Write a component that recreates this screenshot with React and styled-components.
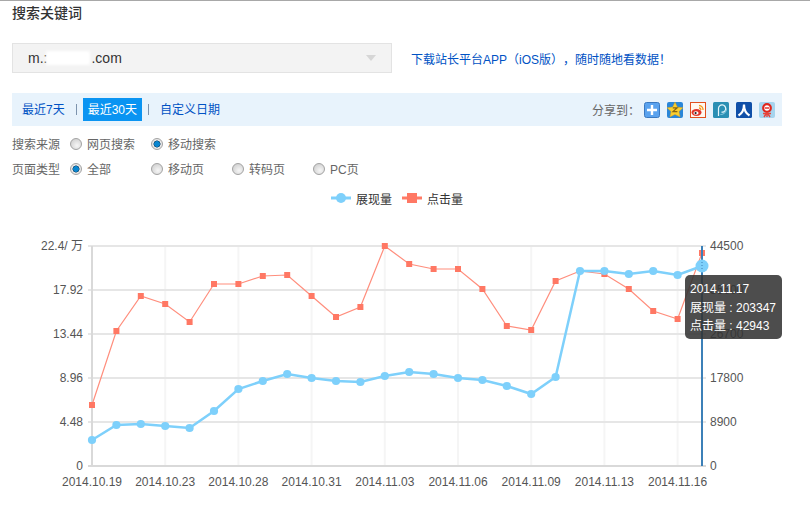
import React from 'react';
import styled, { createGlobalStyle } from 'styled-components';

const GlobalStyle = createGlobalStyle`
    html, body {
        margin: 0;
        padding: 0;
        background: #fff;
    }
    body {
        font-family: "Liberation Sans", "Noto Sans CJK SC", sans-serif;
        font-size: 12px;
        color: #555;
        text-spacing-trim: space-all;
    }
`

const Page = styled.div`
    width: 810px;
    height: 517px;
    overflow: hidden;
    border-top: 1px solid #a8a8a8;
    box-sizing: border-box;
`
const Title = styled.h2`
    margin: 0;
    padding-left: 12px;
    height: 24px;
    line-height: 24px;
    font-size: 14px;
    font-weight: 500;
    color: #333;
`
const SiteRow = styled.div`
    display: flex;
    align-items: center;
    margin: 18px 0 0 12px;
`
const SiteSelect = styled.div`
    width: 380px;
    height: 30px;
    box-sizing: border-box;
    padding: 0 15px;
    display: flex;
    align-items: center;
    justify-content: space-between;
    background: #f3f3f3;
    border: 1px solid #e3e3e3;
`
const SiteName = styled.span`
    display: flex;
    align-items: center;
    font-size: 14px;
    color: #333;
`
const Redacted = styled.span`
    width: 44px;
    height: 14px;
    margin: 0 1px 0 -1px;
    background: #fff;
    filter: blur(1.5px);
`
const Caret = styled.span`
    width: 0;
    height: 0;
    border-left: 5px solid transparent;
    border-right: 5px solid transparent;
    border-top: 6px solid #d6d6d6;
`
const AppLink = styled.a`
    margin-left: 19px;
    color: #0052c4;
    text-decoration: none;
`
const RangeBar = styled.div`
    display: flex;
    align-items: center;
    justify-content: space-between;
    width: 770px;
    height: 33px;
    margin: 20px 0 0 12px;
    padding: 0 7px 0 5px;
    box-sizing: border-box;
    background: #e8f3fc;
`
const RangeTabs = styled.div`
    display: flex;
    align-items: center;
`
const RangeTab = styled.a`
    display: block;
    height: 23px;
    line-height: 25px;
    padding: 0 5px;
    color: ${p => (p.$active ? '#fff' : '#0052c4')};
    background: ${p => (p.$active ? '#0a94f2' : 'transparent')};
`
const Sep = styled.span`
    width: 1px;
    height: 11px;
    margin: 0 ${p => p.$gap}px;
    background: #7d93ad;
`
const Share = styled.div`
    display: flex;
    align-items: center;
    gap: 4px;
    color: #666;
`
const ShareList = styled.div`
    display: flex;
    align-items: center;
    gap: 7px;
`
const ShareIcon = styled.svg`
    display: block;
    width: 16px;
    height: 16px;
`
const Filters = styled.div`
    margin: 5px 0 0 12px;
`
const FilterRow = styled.div`
    display: grid;
    grid-template-columns: 58px repeat(4, 81px);
    align-items: center;
    height: 25px;
    color: #666;
`
const Choice = styled.label`
    display: flex;
    align-items: center;
    gap: 5px;
`
const Radio = styled.span`
    width: 12px;
    height: 12px;
    box-sizing: border-box;
    border-radius: 50%;
    border: 1px solid #a2a2a2;
    background: ${p => (p.$checked
        ? 'radial-gradient(circle, #0a86d0 0 2.5px, #123f60 3.2px, #e8e8e8 3.8px)'
        : 'radial-gradient(circle at 60% 65%, #f6f6f6, #c8c8c8)')};
`
const Legend = styled.div`
    display: flex;
    align-items: center;
    height: 16px;
    margin: 9px 0 1px;
    padding-left: 331px;
    color: #333;
`
const LegendItem = styled.div`
    display: flex;
    align-items: center;
    gap: 5px;
    margin-right: 10px;
`
const ChartArea = styled.div`
    position: relative;
`
const Chart = styled.svg`
    display: block;
    width: 810px;
    height: 310px;
    font-family: "Liberation Sans", "Noto Sans CJK SC", sans-serif;
    font-size: 12px;
    fill: #555;
`
const Tooltip = styled.div`
    position: absolute;
    left: 685px;
    top: 68px;
    width: 97px;
    height: 64px;
    box-sizing: border-box;
    padding: 5px;
    border-radius: 5px;
    background: rgba(50, 50, 50, 0.87);
    color: #fff;
    line-height: 18.5px;
    white-space: nowrap;
`

const LEFT = 92
const STEP = 24.4
const TOP = 246
const BOTTOM = 466

const views = [440, 425, 424, 426, 428, 411, 389, 381, 374, 378, 381, 382, 376, 372, 374, 378, 380, 386, 394, 377, 271, 271, 274, 271, 275, 266]
const clicks = [405, 331, 296, 304, 322, 284, 284, 276, 275, 296, 317, 307, 246, 264, 269, 269, 289, 326, 330, 281, 271, 274, 289, 311, 319, 253]
const gridLines = [290, 334, 378, 422]
const leftLabels = ['22.4/ 万', '17.92', '13.44', '8.96', '4.48', '0']
const rightLabels = ['44500', '35600', '26700', '17800', '8900', '0']
const dates = ['2014.10.19', '2014.10.23', '2014.10.28', '2014.10.31', '2014.11.03', '2014.11.06', '2014.11.09', '2014.11.13', '2014.11.16']

const px = i => LEFT + i * STEP
const toPoints = ys => ys.map((y, i) => `${px(i)},${y}`).join(' ')

const ShareIcons = () => (
    <ShareList>
        <ShareIcon viewBox="0 0 16 16">
            <rect x=".5" y=".5" width="15" height="15" rx="2" fill="#5aa2ee" stroke="#3a78c0" />
            <path d="M8 3v10M3 8h10" stroke="#fff" strokeWidth="2.4" />
        </ShareIcon>
        <ShareIcon viewBox="0 0 16 16">
            <rect width="16" height="16" rx="2" fill="#2a86d8" />
            <path d="M8 0l2.4 5 5.6.7-4 3.8 1.1 5.5L8 12.4 2.9 15 4 9.5 0 5.7 5.6 5z" fill="#fbcf2e" stroke="#d99a12" strokeWidth=".4" />
            <path d="M5.8 5.8h4.4L6 9.6h4.4" fill="none" stroke="#8a6510" strokeWidth="1.2" />
        </ShareIcon>
        <ShareIcon viewBox="0 0 16 16">
            <rect x=".5" y=".5" width="15" height="15" fill="#fff8f0" stroke="#e2501e" />
            <ellipse cx="6.5" cy="10.5" rx="5" ry="3.4" fill="#e0342a" />
            <ellipse cx="6" cy="11" rx="2.6" ry="1.8" fill="#fff" />
            <circle cx="5.6" cy="11.1" r="1.1" fill="#222" />
            <path d="M9 3.5a4 4 0 0 1 4 4.5M9 6a1.7 1.7 0 0 1 1.8 2" fill="none" stroke="#f39a1e" strokeWidth="1.3" />
        </ShareIcon>
        <ShareIcon viewBox="0 0 16 16">
            <rect width="16" height="16" rx="1.5" fill="#2a8fb4" />
            <path d="M5.5 14V6.5a3.6 3.6 0 1 1 3 3.6" fill="none" stroke="#e6f6fb" strokeWidth="1.2" />
            <path d="M7.5 12.5c3.5 0 6-2.5 6-6" fill="none" stroke="#8fd0e6" strokeWidth="1" />
        </ShareIcon>
        <ShareIcon viewBox="0 0 16 16">
            <rect width="16" height="16" rx="1.5" fill="#0f4fa8" />
            <path d="M8 2.5C8 8 6 11.5 2.5 13.5M8 2.5c0 5.5 2 9 5.5 11" fill="none" stroke="#fff" strokeWidth="2.2" />
        </ShareIcon>
        <ShareIcon viewBox="0 0 16 16">
            <rect width="16" height="16" rx="2" fill="#a6d4ee" />
            <circle cx="8" cy="6" r="3.8" fill="#fff" stroke="#e0261c" strokeWidth="2.2" />
            <path d="M6 6h4" stroke="#e0261c" strokeWidth="1.4" />
            <path d="M4 11.5h8M8 10v5M5 15l2-3M11 15l-2-3" fill="none" stroke="#e8433a" strokeWidth="1.4" />
        </ShareIcon>
    </ShareList>
)

const App = () => {
    return (
        <>
            <GlobalStyle />
            <Page>
                <Title>搜索关键词</Title>
                <SiteRow>
                    <SiteSelect>
                        <SiteName>m.:<Redacted />.com</SiteName>
                        <Caret />
                    </SiteSelect>
                    <AppLink>下载站长平台APP（iOS版），随时随地看数据！</AppLink>
                </SiteRow>
                <RangeBar>
                    <RangeTabs>
                        <RangeTab>最近7天</RangeTab>
                        <Sep $gap={6} />
                        <RangeTab $active>最近30天</RangeTab>
                        <Sep $gap={6} />
                        <RangeTab>自定义日期</RangeTab>
                    </RangeTabs>
                    <Share>
                        <span>分享到：</span>
                        <ShareIcons />
                    </Share>
                </RangeBar>
                <Filters>
                    <FilterRow>
                        <span>搜索来源</span>
                        <Choice><Radio />网页搜索</Choice>
                        <Choice><Radio $checked />移动搜索</Choice>
                    </FilterRow>
                    <FilterRow>
                        <span>页面类型</span>
                        <Choice><Radio $checked />全部</Choice>
                        <Choice><Radio />移动页</Choice>
                        <Choice><Radio />转码页</Choice>
                        <Choice><Radio />PC页</Choice>
                    </FilterRow>
                </Filters>
                <Legend>
                    <LegendItem>
                        <svg width="20" height="12" viewBox="0 0 20 12">
                            <path d="M0 6h20" stroke="#7ed0fb" strokeWidth="3" />
                            <circle cx="10" cy="6" r="5" fill="#7ed0fb" />
                        </svg>
                        展现量
                    </LegendItem>
                    <LegendItem>
                        <svg width="20" height="12" viewBox="0 0 20 12">
                            <path d="M0 6h20" stroke="#ff7b66" strokeWidth="3" />
                            <rect x="5" y="1" width="10" height="10" fill="#ff7864" />
                        </svg>
                        点击量
                    </LegendItem>
                </Legend>
                <ChartArea>
                    <Chart viewBox="0 207 810 310">
                        {dates.map((d, i) => i > 0 && (
                            <path key={d} d={`M${px(i * 3)} ${TOP}V${BOTTOM}`} stroke="#f5f5f5" strokeWidth="2" />
                        ))}
                        {[TOP, ...gridLines].map(y => (
                            <path key={y} d={`M88 ${y}H706`} stroke="#e6e6e6" strokeWidth="2" />
                        ))}
                        <path d={`M${LEFT} ${TOP}V${BOTTOM}`} stroke="#d9d9d9" strokeWidth="2" />
                        <path d={`M88 ${BOTTOM}H706`} stroke="#d9d9d9" strokeWidth="2" />

                        <polyline points={toPoints(clicks)} fill="none" stroke="#ff8e7d" strokeWidth="1.2" />
                        {clicks.map((y, i) => (
                            <rect key={i} x={px(i) - 3} y={y - 3} width="6" height="6" fill="#ff7864" />
                        ))}
                        <polyline points={toPoints(views)} fill="none" stroke="#7ed0fb" strokeWidth="2.5" />
                        {views.slice(0, -1).map((y, i) => (
                            <circle key={i} cx={px(i)} cy={y} r="4.1" fill="#7ed0fb" />
                        ))}

                        <path d={`M702 ${TOP}V${BOTTOM}`} stroke="#3c80b8" strokeWidth="2" />
                        <circle cx="702" cy="266" r="6.5" fill="#7ed0fb" />
                        <path d="M702 262v8" stroke="#3c80b8" strokeWidth="1" strokeDasharray="1 2" />

                        {leftLabels.map((t, i) => (
                            <text key={t} x="83" y={TOP + i * 44 + 4} textAnchor="end">{t}</text>
                        ))}
                        {rightLabels.map((t, i) => (
                            <text key={t} x="710" y={TOP + i * 44 + 4}>{t}</text>
                        ))}
                        {dates.map((d, i) => (
                            <text key={d} x={px(i * 3)} y="486" textAnchor="middle">{d}</text>
                        ))}
                    </Chart>
                    <Tooltip>
                        2014.11.17<br />
                        展现量 : 203347<br />
                        点击量 : 42943
                    </Tooltip>
                </ChartArea>
            </Page>
        </>
    )
}

export default App
